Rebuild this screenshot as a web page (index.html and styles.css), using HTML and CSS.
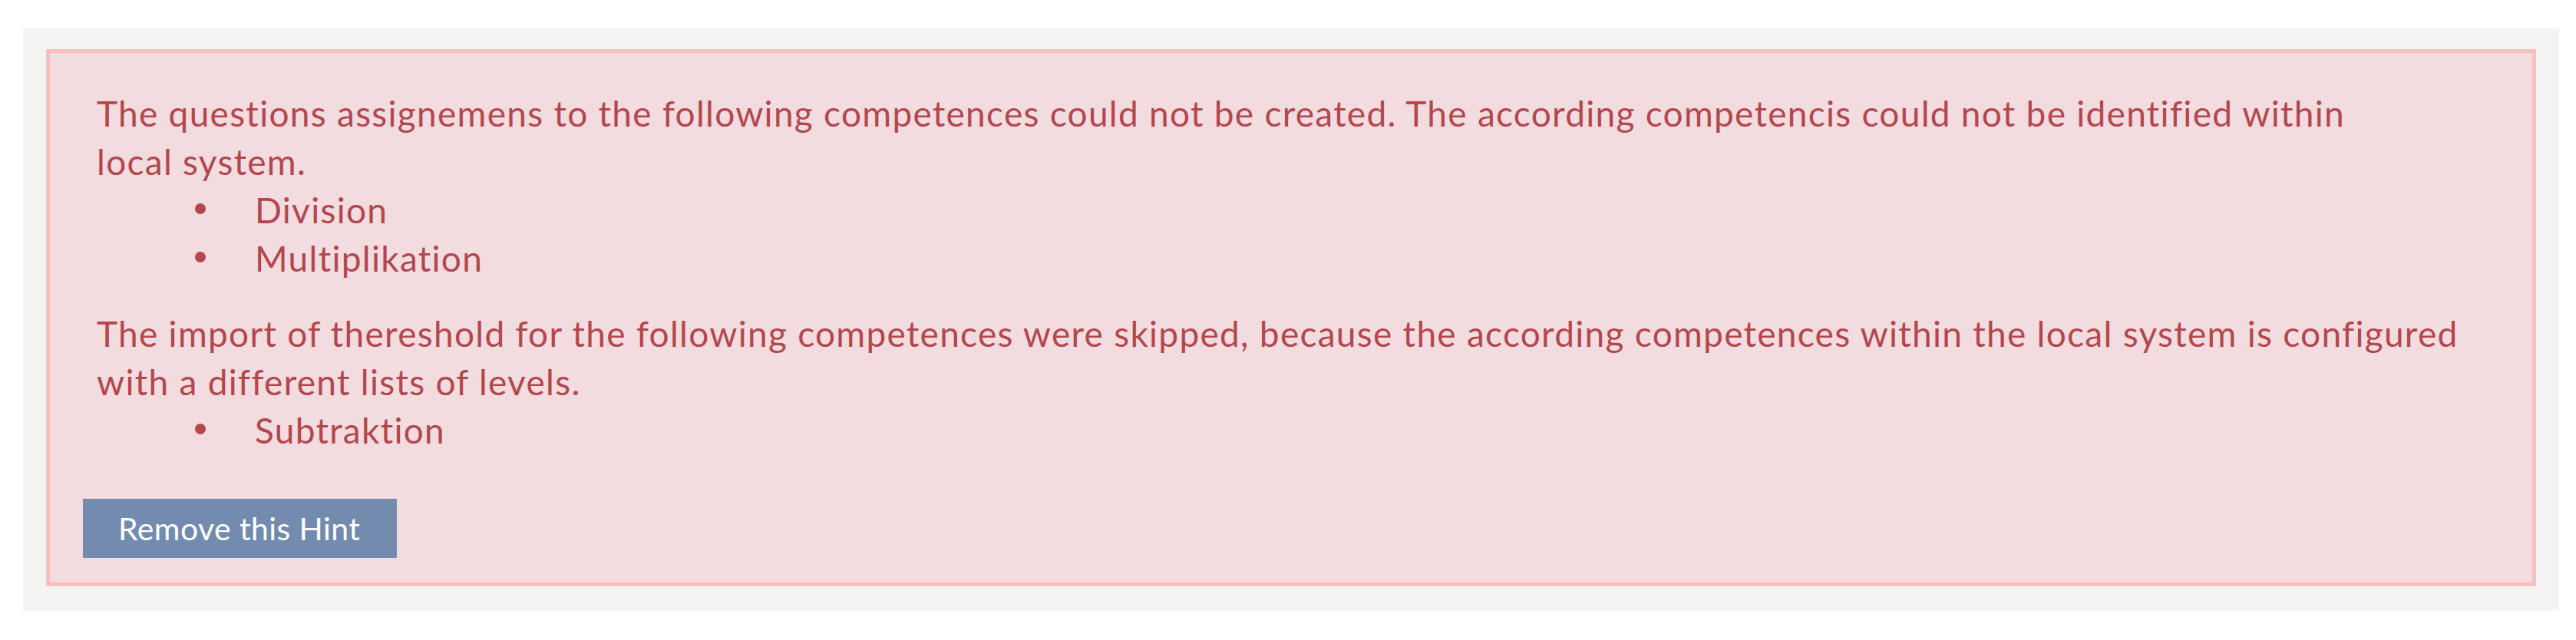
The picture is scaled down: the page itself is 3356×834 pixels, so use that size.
FILE: index.html
```html
<!DOCTYPE html>
<html>
<head>
<meta charset="utf-8"/>
<title>Import Hint</title>
<link rel="stylesheet" href="styles.css">
</head>
<body>

<div class="panel">
  <div class="alert">
    <p>The questions assignemens to the following competences could not be created. The according competencis could not be identified within<br>local system.</p>
    <ul class="items">
      <li>Division</li>
      <li>Multiplikation</li>
    </ul>
    <p>The import of thereshold for the following competences were skipped, because the according competences within the local system is configured<br>with a different lists of levels.</p>
    <ul class="items">
      <li>Subtraktion</li>
    </ul>
    <button class="btn">Remove this Hint</button>
  </div>
</div>

</body>
</html>
```

FILE: styles.css
```css
body {
  margin: 0;
  padding: 37px 22px 0 30px;
  font-family: Lato, "Open Sans", sans-serif;
  font-variant-ligatures: none;
  --alert-text: #b4474d;
}
.panel {
  background-color: #f4f4f3;
  padding: 27px 30px 32px;
}
.alert {
  background-color: #f2dcdf;
  border: 5px solid #f9bfbf;
  color: var(--alert-text);
  padding: 47px 60px 32px 61px;
  font-size: 46px;
  line-height: 63px;
  letter-spacing: 1.28px;
}
.alert p {
  margin: 0;
  white-space: nowrap;
}
.alert p + .items + p {
  margin-top: 35px;
}
/* bullet lists */
.items {
  list-style: none;
  margin: 0;
  padding: 0 0 0 128px;
}
.items li {
  display: flex;
}
.items li::before {
  content: "";
  flex: none;
  width: 14px;
  height: 14px;
  border-radius: 50%;
  background-color: currentColor;
  margin: 23px 64px 0 0;
}
.btn {
  display: block;
  margin: 58px 0 0 -18px;
  height: 77px;
  padding: 0 48px 0 46px;
  border: 0;
  background-color: #728bae;
  color: #fff;
  font-family: inherit;
  font-variant-ligatures: none;
  font-size: 41px;
  letter-spacing: 0.4px;
}
```
